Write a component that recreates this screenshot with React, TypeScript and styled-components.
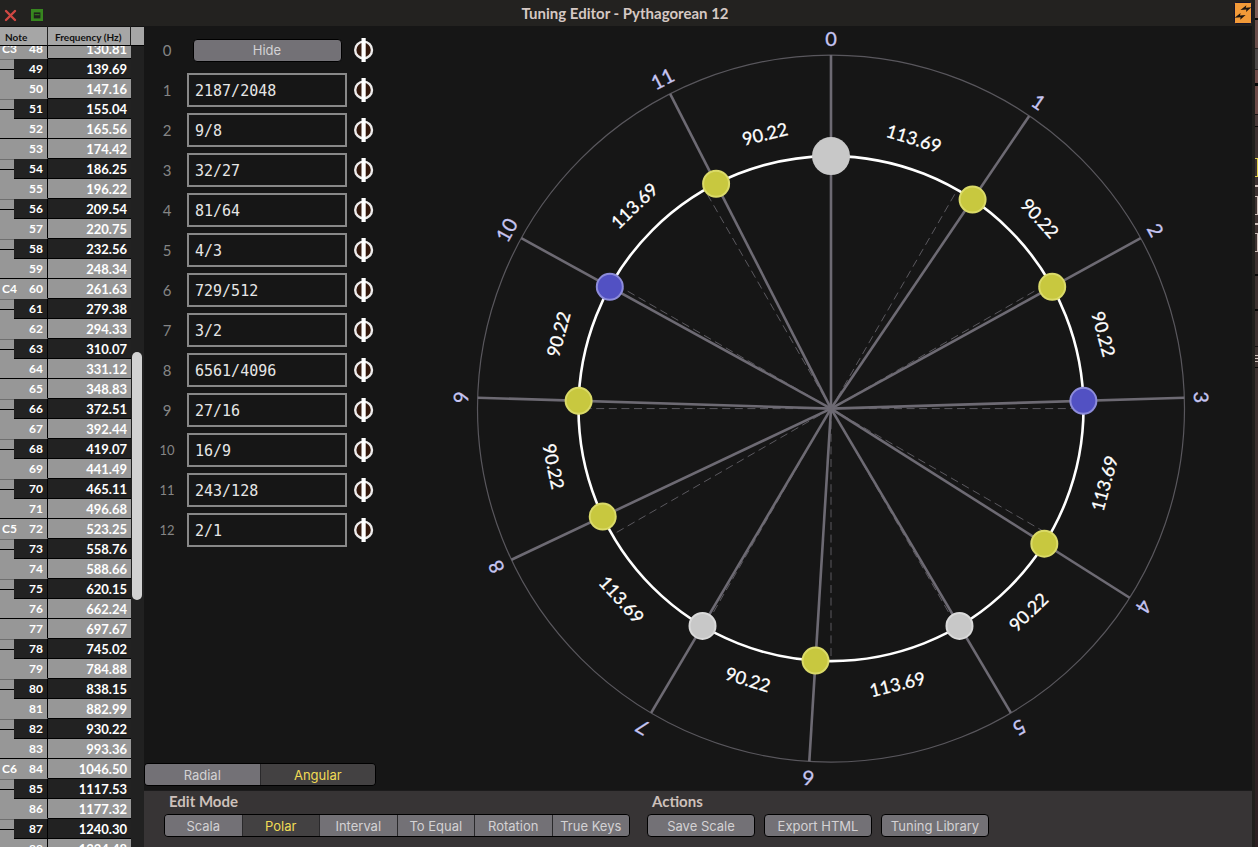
import React, { useLayoutEffect, useRef, useState } from 'react';
import styled, { createGlobalStyle, css } from 'styled-components';

const GlobalStyle = createGlobalStyle`
  *, *::before, *::after { box-sizing: border-box; }
  body { margin: 0; background: #161616; overflow: hidden; }
`;

const labelFont = 'Lato, "Liberation Sans", sans-serif';
const buttonFont = 'Inter, "Liberation Sans", sans-serif';
const monoFont = '"DejaVu Sans Mono", "Liberation Mono", monospace';

/* ---------- shell ---------- */

const Desktop = styled.div`
  display: flex;
  height: 100vh;
  background: #161616;
  font-family: ${labelFont};
`;

const Window = styled.div`
  flex: 1;
  min-width: 0;
  display: flex;
  flex-direction: column;
`;

const TitleBar = styled.header`
  flex: none;
  display: flex;
  align-items: center;
  justify-content: space-between;
  height: 26px;
  background: #232220;
`;

const WindowButtons = styled.div`
  flex: 1;
  display: flex;
  align-items: center;
  gap: 14px;
  padding: 4px 0 0 4px;
`;

const TitleEnd = styled.div`
  flex: 1;
  display: flex;
  justify-content: flex-end;
`;

const IconButton = styled.button`
  display: flex;
  padding: 0;
  border: 0;
  background: none;
  cursor: pointer;
`;

const Title = styled.h1`
  margin: 0;
  padding-right: 6px;
  color: #d5c8c3;
  font-size: 15px;
  line-height: 26px;
  font-weight: 700;
`;

const Body = styled.div`
  flex: 1;
  min-height: 0;
  display: flex;
`;

/* ---------- note table ---------- */

const Sidebar = styled.aside`
  flex: none;
  display: flex;
  width: 144px;
`;

const TableViewport = styled.div`
  width: 131px;
  overflow: hidden;
  background: #000;
`;

const Table = styled.table`
  width: 100%;
  table-layout: fixed;
  border-collapse: separate;
  border-spacing: 0;
`;

const HeadCell = styled.th<{ $w?: number }>`
  position: sticky;
  top: 0;
  z-index: 1;
  width: ${(p) => (p.$w ? `${p.$w}px` : 'auto')};
  height: 20px;
  padding: 2px 0 0 ${(p) => (p.$w ? 5 : 7)}px;
  border-right: 1px solid #222;
  border-bottom: 1px solid #000;
  border-top: 1px solid #111;
  background: #a6a6a6;
  color: #111;
  text-align: left;
  font-size: 10px;
  line-height: 14px;
  font-weight: 700;
  white-space: nowrap;
`;

const Cell = styled.td`
  height: 20px;
  padding: 0;
`;

const NoteKey = styled.div<{ $line: boolean }>`
  display: flex;
  justify-content: space-between;
  height: 20px;
  padding: 0 4px 0 2px;
  border-right: 1px solid #000;
  border-bottom: 1px solid ${(p) => (p.$line ? '#000' : '#979797')};
  background: #979797;
  color: #fff;
  font-size: 12px;
  line-height: 20px;
  font-weight: 700;
`;

const AccidentalKey = styled.div`
  display: flex;
  height: 20px;
  background: #979797;
`;

const KeyGap = styled.div`
  width: 14px;
  border-top: 1px solid #6f6f6f;

  &::after {
    content: '';
    display: block;
    margin-top: 9px;
    border-top: 1px solid #000;
  }
`;

const AccidentalFace = styled.div`
  flex: 1;
  padding-right: 4px;
  border-right: 1px solid #000;
  border-bottom: 1px solid #000;
  background: #222;
  color: #fff;
  text-align: right;
  font-size: 12px;
  line-height: 20px;
  font-weight: 700;
`;

const Frequency = styled.div<{ $dark: boolean }>`
  height: 20px;
  padding-right: 4px;
  border-bottom: 1px solid #000;
  background: ${(p) => (p.$dark ? '#222' : '#979797')};
  color: #fff;
  text-align: right;
  font-size: 13px;
  line-height: 20px;
  font-weight: 700;
`;

const ScrollColumn = styled.div`
  flex: 1;
  display: flex;
  flex-direction: column;
  background: #212121;
`;

const ScrollCap = styled.div`
  height: 20px;
  border-top: 1px solid #111;
  border-bottom: 1px solid #000;
  background: #a6a6a6;
`;

const ScrollTrack = styled.div`
  flex: 1;
  display: grid;
  grid-template-rows: 306fr 248fr 247fr;
  padding: 0 2px 0 1px;
`;

const ScrollThumb = styled.div`
  grid-row: 2;
  border-radius: 5px;
  background: #d2d2d2;
`;

/* ---------- editor ---------- */

const Main = styled.main`
  flex: 1;
  min-width: 0;
  display: flex;
  flex-direction: column;
`;

const Editor = styled.div`
  flex: 1;
  min-height: 0;
  display: flex;
  background: #161616;
`;

const ScalePanel = styled.section`
  flex: none;
  display: flex;
  flex-direction: column;
  justify-content: space-between;
  width: 266px;
  padding: 4px 0;
`;

const ScaleRows = styled.div`
  display: flex;
  flex-direction: column;
`;

const ScaleRow = styled.div`
  display: grid;
  grid-template-columns: 28px 160px 22px;
  column-gap: 6px;
  align-items: center;
  justify-items: center;
  height: 40px;
  padding-left: 9px;
`;

const RowLabel = styled.label<{ $wide?: boolean }>`
  color: #858585;
  font-size: ${(p) => (p.$wide ? 13 : 15)}px;
  line-height: 20px;
`;

const RatioInput = styled.input`
  width: 160px;
  height: 34px;
  padding: 1px 6px 0;
  border: 2px solid #888;
  border-radius: 0;
  background: #161616;
  color: #e6e6e6;
  font-family: ${monoFont};
  font-size: 15px;
  line-height: 20px;
  outline: none;
`;

const face = css`
  border: 1px solid #000;
  background: #737176;
  color: #d4d2d4;
  font-family: ${buttonFont};
  font-size: 13px;
  line-height: 20px;
  font-weight: 400;
  white-space: nowrap;
  padding: 0;
  cursor: pointer;
`;

const PushButton = styled.button<{ $w: number }>`
  ${face}
  width: ${(p) => p.$w}px;
  height: 23px;
  border-radius: 4px;
`;

const Segmented = styled.div<{ $w: number }>`
  display: flex;
  width: ${(p) => p.$w}px;
  height: 23px;
  border: 1px solid #000;
  border-radius: 4px;
  overflow: hidden;
`;

const Segment = styled.button<{ $on: boolean }>`
  ${face}
  flex: 1 1 0;
  min-width: 0;
  border: 0;
  background: ${(p) => (p.$on ? '#434142' : '#737176')};
  color: ${(p) => (p.$on ? '#f1dc55' : '#d4d2d4')};

  & + & {
    border-left: 1px solid #2a292b;
  }
`;

const WheelArea = styled.section`
  flex: 1;
  min-width: 0;
  display: flex;
`;

const WheelSvg = styled.svg`
  width: 100%;
  height: 100%;
  font-family: ${labelFont};
`;

const Toolbar = styled.footer`
  flex: none;
  display: flex;
  gap: 17px;
  height: 57px;
  padding: 0 0 0 20px;
  border-top: 1px solid #1c1b1c;
  background: #373435;
`;

const Group = styled.div`
  display: flex;
  flex-direction: column;
  gap: 3px;
`;

const GroupTitle = styled.h2`
  margin: 0;
  padding-left: 5px;
  color: #cdc0bb;
  font-size: 15px;
  line-height: 20px;
  font-weight: 700;
`;

const ButtonRow = styled.div`
  display: flex;
  gap: 9px;
`;

/* ---------- neighbouring window seen at the right edge ---------- */

const Neighbour = styled.div`
  flex: none;
  display: flex;
  flex-direction: column;
  width: 6px;
  border-left: 3px solid #201f1c;
  background: linear-gradient(#3d3230, #3d3230 45%, #2c2022);
`;

const Strip = styled.div<{ $h: number; $c?: string }>`
  flex: none;
  height: ${(p) => p.$h}px;
  background: ${(p) => p.$c || 'transparent'};
`;

const Bracket = styled.div<{ $c: string }>`
  flex: none;
  height: 19px;
  border: 1px solid ${(p) => p.$c};
  border-left: 0;
`;

const strips: Array<[number, string?]> = [
  [18, '#7c5d58'], [2, '#0c0a0a'], [28, '#6a4e4a'], [1, '#2a2423'], [20, '#4c4746'],
  [1, '#2a2423'], [13, '#6f4c48'], [3, '#050505'], [28, '#6c4b47'], [1, '#1a1514'],
  [11, '#4a3a39'], [1, '#0a0808'], [31],
];
const lowerStrips: Array<[number, string?]> = [
  [22], [2, '#080606'], [33], [2, '#080606'], [35], [1, '#141010'], [8],
  [1, '#cdbfb9'], [2], [1, '#cdbfb9'], [2], [1, '#cdbfb9'], [5], [1, '#080606'],
];

/* ---------- data ---------- */

const frequencies = [
  '130.81', '139.69', '147.16', '155.04', '165.56', '174.42', '186.25', '196.22', '209.54',
  '220.75', '232.56', '248.34', '261.63', '279.38', '294.33', '310.07', '331.12', '348.83',
  '372.51', '392.44', '419.07', '441.49', '465.11', '496.68', '523.25', '558.76', '588.66',
  '620.15', '662.24', '697.67', '745.02', '784.88', '838.15', '882.99', '930.22', '993.36',
  '1046.50', '1117.53', '1177.32', '1240.30', '1324.48',
];
const notes = frequencies.map((frequency, i) => {
  const number = 48 + i;
  const pitch = number % 12;
  return {
    number,
    frequency,
    name: pitch === 0 ? `C${number / 12 - 1}` : '',
    accidental: [1, 3, 6, 8, 10].includes(pitch),
    line: pitch === 4 || pitch === 11,
  };
});

const ratios = [
  '2187/2048', '9/8', '32/27', '81/64', '4/3', '729/512', '3/2', '6561/4096', '27/16', '16/9',
  '243/128', '2/1',
];
const cents = [0, 113.69, 203.91, 294.13, 407.82, 498.04, 611.73, 701.96, 815.64, 905.87, 996.09, 1109.78];
const steps = ['113.69', '90.22', '90.22', '113.69', '90.22', '113.69', '90.22', '113.69', '90.22', '90.22', '113.69', '90.22'];

const palette = {
  grey: ['#c8c8c8', '#dadada'],
  yellow: ['#c8c83f', '#dada68'],
  blue: ['#5251c3', '#8d8cda'],
};
const nodeColors: Array<keyof typeof palette> = [
  'grey', 'yellow', 'yellow', 'blue', 'yellow', 'grey', 'yellow', 'grey', 'yellow', 'yellow', 'blue', 'yellow',
];

/* ---------- pieces ---------- */

const PhiIcon = () => (
  <svg width="20" height="26" viewBox="0 0 20 26" aria-hidden="true">
    <circle cx="9.6" cy="13" r="8.4" fill="#34180c" stroke="#eeecec" strokeWidth="2.4" />
    <rect x="7.5" y="1" width="4.2" height="24" fill="#fff" />
  </svg>
);

const RADIUS = 252.5;
const RIM = 353.5;

function polar(deg: number, r: number): [number, number] {
  const a = (deg * Math.PI) / 180;
  return [r * Math.sin(a), -r * Math.cos(a)];
}

function Wheel() {
  return (
    <WheelSvg viewBox="-421 -382.6 842 764" role="img" aria-label="Scale degrees by angle">
      <circle r={RIM} fill="none" stroke="#59575d" strokeWidth="1.2" />
      {cents.map((_, i) => {
        const [x, y] = polar(i * 30, 250);
        return (
          <line key={i} x2={x} y2={y} stroke="#5a585e" strokeWidth="1" strokeDasharray="8 4.6" />
        );
      })}
      {cents.map((c, i) => {
        const [x, y] = polar(c * 0.3, RIM);
        return <line key={i} x2={x} y2={y} stroke="#6d6a73" strokeWidth="2.6" />;
      })}
      <circle r={RADIUS} fill="none" stroke="#fff" strokeWidth="2.6" />
      {steps.map((text, i) => {
        const next = i === 11 ? 1200 : cents[i + 1];
        const deg = ((cents[i] + next) / 2) * 0.3;
        const [x, y] = polar(deg, 283);
        const turn = deg > 90 && deg < 270 ? deg - 180 : deg;
        return (
          <text
            key={i}
            transform={`translate(${x} ${y}) rotate(${turn})`}
            y="7"
            textAnchor="middle"
            fontSize="18"
            fill="#fff"
            stroke="#fff"
            strokeWidth="0.3"
          >
            {text}
          </text>
        );
      })}
      {cents.map((c, i) => {
        const [x, y] = polar(c * 0.3, 370);
        return (
          <text
            key={i}
            transform={`translate(${x} ${y}) rotate(${c * 0.3})`}
            y="7"
            textAnchor="middle"
            fontSize="20"
            fill="#c6c5f2"
            stroke="#c6c5f2"
            strokeWidth="0.3"
          >
            {i}
          </text>
        );
      })}
      {cents.map((c, i) => {
        const [x, y] = polar(c * 0.3, RADIUS);
        const [fill, stroke] = palette[nodeColors[i]];
        return i === 0 ? (
          <circle key={i} cx={x} cy={y} r="19" fill={fill} />
        ) : (
          <circle key={i} cx={x} cy={y} r="13" fill={fill} stroke={stroke} strokeWidth="2" />
        );
      })}
    </WheelSvg>
  );
}

function NoteTable() {
  const viewport = useRef<HTMLDivElement>(null);
  useLayoutEffect(() => {
    if (viewport.current) viewport.current.scrollTop = 7;
  }, []);
  return (
    <Sidebar>
      <TableViewport ref={viewport}>
        <Table>
          <thead>
            <tr>
              <HeadCell $w={48}>Note</HeadCell>
              <HeadCell>Frequency (Hz)</HeadCell>
            </tr>
          </thead>
          <tbody>
            {notes.map((n) => (
              <tr key={n.number}>
                <Cell>
                  {n.accidental ? (
                    <AccidentalKey>
                      <KeyGap />
                      <AccidentalFace>{n.number}</AccidentalFace>
                    </AccidentalKey>
                  ) : (
                    <NoteKey $line={n.line}>
                      <span>{n.name}</span>
                      <span>{n.number}</span>
                    </NoteKey>
                  )}
                </Cell>
                <Cell>
                  <Frequency $dark={n.accidental}>{n.frequency}</Frequency>
                </Cell>
              </tr>
            ))}
          </tbody>
        </Table>
      </TableViewport>
      <ScrollColumn>
        <ScrollCap />
        <ScrollTrack>
          <ScrollThumb />
        </ScrollTrack>
      </ScrollColumn>
    </Sidebar>
  );
}

interface ChoiceProps {
  label: string;
  width: number;
  options: string[];
  initial: string;
}

function Choice({ label, width, options, initial }: ChoiceProps) {
  const [value, setValue] = useState(initial);
  return (
    <Segmented $w={width} role="group" aria-label={label}>
      {options.map((o) => (
        <Segment key={o} type="button" $on={o === value} aria-pressed={o === value} onClick={() => setValue(o)}>
          {o}
        </Segment>
      ))}
    </Segmented>
  );
}

export default function App() {
  return (
    <Desktop>
      <GlobalStyle />
      <Window>
        <TitleBar>
          <WindowButtons>
            <IconButton type="button" aria-label="Close">
              <svg width="13" height="13" viewBox="0 0 13 13">
                <path d="M2 2L11 11M11 2L2 11" stroke="#d04843" strokeWidth="2.4" strokeLinecap="round" />
              </svg>
            </IconButton>
            <IconButton type="button" aria-label="Restore">
              <svg width="12" height="12" viewBox="0 0 12 12">
                <rect width="12" height="12" fill="#37861f" />
                <path d="M2.8 3.4h6.6v6h-6.6z" fill="#1f221c" />
                <path d="M3.6 5.2h5v1h-5z" fill="#37861f" />
              </svg>
            </IconButton>
          </WindowButtons>
          <Title>Tuning Editor - Pythagorean 12</Title>
          <TitleEnd>
            <IconButton type="button" aria-label="Sync">
              <svg width="18" height="22" viewBox="0 0 18 22">
                <rect x="0.5" y="0.5" width="17" height="21" rx="1" fill="#f29a38" stroke="#16132a" />
                <path d="M6.4 8L12.4 3.2l-.6 2.6 5.6-.6-5.4 4.8.4-2.6z" fill="#1b1410" />
                <path d="M0.6 15.8L6.6 11l-.6 2.6 5.6-.6-5.4 4.8.4-2.6z" fill="#1b1410" />
              </svg>
            </IconButton>
          </TitleEnd>
        </TitleBar>
        <Body>
          <NoteTable />
          <Main>
            <Editor>
              <ScalePanel>
                <ScaleRows>
                  <ScaleRow>
                    <RowLabel as="span">0</RowLabel>
                    <PushButton type="button" $w={149}>Hide</PushButton>
                    <IconButton type="button" aria-label="Tune degree 0"><PhiIcon /></IconButton>
                  </ScaleRow>
                  {ratios.map((ratio, i) => (
                    <ScaleRow key={ratio}>
                      <RowLabel htmlFor={`degree-${i + 1}`} $wide={i > 8}>{i + 1}</RowLabel>
                      <RatioInput id={`degree-${i + 1}`} defaultValue={ratio} spellCheck={false} />
                      <IconButton type="button" aria-label={`Tune degree ${i + 1}`}><PhiIcon /></IconButton>
                    </ScaleRow>
                  ))}
                </ScaleRows>
                <Choice label="Display" width={232} options={['Radial', 'Angular']} initial="Angular" />
              </ScalePanel>
              <WheelArea>
                <Wheel />
              </WheelArea>
            </Editor>
            <Toolbar>
              <Group>
                <GroupTitle>Edit Mode</GroupTitle>
                <Choice
                  label="Edit Mode"
                  width={466}
                  options={['Scala', 'Polar', 'Interval', 'To Equal', 'Rotation', 'True Keys']}
                  initial="Polar"
                />
              </Group>
              <Group>
                <GroupTitle>Actions</GroupTitle>
                <ButtonRow>
                  <PushButton type="button" $w={108}>Save Scale</PushButton>
                  <PushButton type="button" $w={108}>Export HTML</PushButton>
                  <PushButton type="button" $w={108}>Tuning Library</PushButton>
                </ButtonRow>
              </Group>
            </Toolbar>
          </Main>
        </Body>
      </Window>
      <Neighbour aria-hidden="true">
        {strips.map(([h, c], i) => <Strip key={i} $h={h} $c={c} />)}
        <Bracket $c="#e0cf4a" />
        <Strip $h={8} />
        <Strip $h={2} $c="#cdbfb9" />
        <Strip $h={9} />
        <Bracket $c="#cdbfb9" />
        <Strip $h={8} />
        <Strip $h={2} $c="#cdbfb9" />
        <Strip $h={8} />
        <Bracket $c="#cdbfb9" />
        {lowerStrips.map(([h, c], i) => <Strip key={i} $h={h} $c={c} />)}
      </Neighbour>
    </Desktop>
  );
}
